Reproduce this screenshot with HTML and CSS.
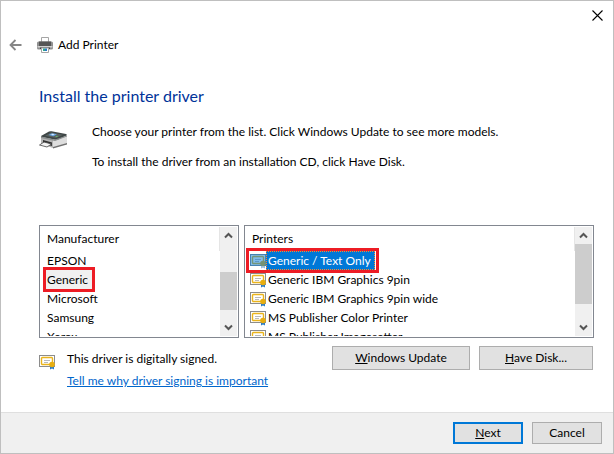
FILE: index.html
```html
<!DOCTYPE html>
<html lang="en">

    <head>
        <meta charset="UTF-8">
        <meta name="viewport" content="width=device-width, initial-scale=1.0">
        <title>Add Printer</title>
        <link rel="stylesheet" href="styles.css">
    </head>

    <body>
        <!-- shared icon shapes -->
        <svg class="icon-defs" width="0" height="0" aria-hidden="true">
            <symbol id="cert" viewBox="0 0 16 16">
                <rect x="0.5" y="1.5" width="15" height="11" fill="#fff" stroke="#8c8c8c" />
                <rect x="2.5" y="3.5" width="11" height="7" rx="1" fill="#fff" stroke="#eab41c" stroke-width="1.4" />
                <path d="M5 6.500h6M5 8.500h4" stroke="#b9b9b9" />
                <path d="M11 11v4.500l2-1 2 1V11z" fill="#2b7cc9" />
                <circle cx="13" cy="10.500" r="2.800" fill="#e8ae10" />
            </symbol>
            <symbol id="up" viewBox="0 0 17 17">
                <path d="M5 10.500l3.500-3.500 3.500 3.500" fill="none" stroke="#555" stroke-width="2" />
            </symbol>
            <symbol id="down" viewBox="0 0 17 17">
                <path d="M5 6.500l3.500 3.500 3.500-3.500" fill="none" stroke="#555" stroke-width="2" />
            </symbol>
        </svg>

        <div class="window">
            <div class="titlebar">
                <button type="button" class="btn-close" aria-label="Close">
                    <svg width="11" height="11" viewBox="0 0 11 11">
                        <path d="M0.500 0.500l10 10M10.500 0.500l-10 10" stroke="#000" stroke-width="1.100" />
                    </svg>
                </button>
            </div>

            <header class="wizard-header">
                <button type="button" class="btn-back" aria-label="Back">
                    <svg width="13" height="12" viewBox="0 0 13 12">
                        <path d="M6.500 1L1.500 6l5 5M1.500 6H12.500" fill="none" stroke="#868686" stroke-width="1.800" />
                    </svg>
                </button>
                <svg width="16" height="16" viewBox="0 0 16 16" aria-hidden="true">
                    <path d="M4.500 6V0.500h7V6" fill="#fff" stroke="#a5a5a5" />
                    <rect x="0" y="4.500" width="16" height="8" rx="1.500" fill="#8f8f8f" />
                    <rect x="2" y="4.500" width="12" height="4.500" fill="#555" />
                    <rect x="0.500" y="9" width="15" height="1.500" fill="#d0d0d0" />
                    <rect x="3" y="10.500" width="10" height="1.500" fill="#444" />
                    <path d="M4.500 11h7v4.500h-7z" fill="#fff" stroke="#a5a5a5" />
                    <rect x="6" y="11.500" width="2" height="2.500" fill="#2fa58c" />
                    <rect x="8" y="11.500" width="2" height="2.500" fill="#2878c8" />
                </svg>
                <span>Add Printer</span>
            </header>

            <main class="content">
                <h1>Install the printer driver</h1>

                <div class="intro">
                    <svg width="30" height="20" viewBox="0 0 30 20" aria-hidden="true">
                        <path d="M2 7L14 10V18L2 14z" fill="#b4b4b4" />
                        <path d="M14 10L28 6V13.500L14 17.500z" fill="#dedede" />
                        <path d="M14 17L28 13V14.500L14 18.500z" fill="#707070" />
                        <path d="M2 6L10 1.500Q11 1 12.500 1.200L27 4Q28.500 4.500 27.500 5.500L19 9.500Q17 10 15 9.500L2.500 7z" fill="#3e4646" />
                        <path d="M2 6.500L16 9.500L28 5.500V6.500L16 11L2 8z" fill="#8b8f8f" />
                        <path d="M6 5.800L12 2.500L24 4.800L17 8z" fill="#59615f" />
                        <path d="M9.500 5L13 3.200L18 4.300L14.500 6.300z" fill="#6ba8e5" />
                        <path d="M12 4.500l2-.7 1.500.6-2 .8z" fill="#d6ebff" />
                        <path d="M16 6.500l2-.8 1.500.5-2 .9z" fill="#65b870" />
                        <path d="M4 10L13 12.500V16L4 13z" fill="#303030" />
                        <path d="M5 12L12.500 14L8 17L0.500 15z" fill="#f3f3f3" stroke="#444" stroke-width=".8" />
                    </svg>
                    <div class="intro-text">
                        <p>Choose your printer from the list. Click Windows Update to see more models.</p>
                        <p>To install the driver from an installation CD, click Have Disk.</p>
                    </div>
                </div>

                <div class="lists">
                    <section class="listbox">
                        <div class="list-view">
                            <h2 id="manufacturer">Manufacturer</h2>
                            <ul role="listbox" aria-labelledby="manufacturer">
                                <li role="option"><span class="name">EPSON</span></li>
                                <li role="option" aria-selected="true" class="picked"><span class="name">Generic</span></li>
                                <li role="option"><span class="name">Microsoft</span></li>
                                <li role="option"><span class="name">Samsung</span></li>
                                <li role="option"><span class="name">Xerox</span></li>
                            </ul>
                        </div>
                        <div class="scrollbar">
                            <button type="button" aria-label="Scroll up"><svg><use href="#up" /></svg></button>
                            <div class="track track-low"><div class="thumb thumb-short"></div></div>
                            <button type="button" aria-label="Scroll down"><svg><use href="#down" /></svg></button>
                        </div>
                    </section>

                    <section class="listbox">
                        <div class="list-view">
                            <h2 id="printers">Printers</h2>
                            <ul role="listbox" aria-labelledby="printers" class="with-icons">
                                <li role="option" aria-selected="true" class="picked active"><svg class="cert"><use href="#cert" /></svg><span class="name">Generic / Text Only</span></li>
                                <li role="option"><svg class="cert"><use href="#cert" /></svg><span class="name">Generic IBM Graphics 9pin</span></li>
                                <li role="option"><svg class="cert"><use href="#cert" /></svg><span class="name">Generic IBM Graphics 9pin wide</span></li>
                                <li role="option"><svg class="cert"><use href="#cert" /></svg><span class="name">MS Publisher Color Printer</span></li>
                                <li role="option"><svg class="cert"><use href="#cert" /></svg><span class="name">MS Publisher Imagesetter</span></li>
                            </ul>
                        </div>
                        <div class="scrollbar">
                            <button type="button" aria-label="Scroll up"><svg><use href="#up" /></svg></button>
                            <div class="track"><div class="thumb"></div></div>
                            <button type="button" aria-label="Scroll down"><svg><use href="#down" /></svg></button>
                        </div>
                    </section>
                </div>

                <div class="signing">
                    <svg class="cert"><use href="#cert" /></svg>
                    <div class="signing-text">
                        <p>This driver is digitally signed.</p>
                        <a href="#">Tell me why driver signing is important</a>
                    </div>
                    <div class="signing-buttons">
                        <button type="button" class="btn btn-update"><u>W</u>indows Update</button>
                        <button type="button" class="btn btn-disk"><u>H</u>ave Disk...</button>
                    </div>
                </div>
            </main>

            <footer class="footer">
                <button type="button" class="btn btn-next"><u>N</u>ext</button>
                <button type="button" class="btn">Cancel</button>
            </footer>
        </div>
    </body>

</html>
```
FILE: styles.css
```css
* {
    box-sizing: border-box;
}

body {
    margin: 0;
    font-family: "Segoe UI", Lato, "Open Sans", sans-serif;
    font-size: 12px;
    line-height: 16px;
    color: #000;
    background: #fff;
}

h1,
h2,
p,
ul {
    margin: 0;
    padding: 0;
    font-weight: normal;
}

ul {
    list-style: none;
}

svg {
    display: block;
    flex: none;
}

button {
    padding: 0;
    border: none;
    background: none;
    font: inherit;
    color: inherit;
}

.icon-defs {
    position: absolute;
}

.window {
    display: flex;
    flex-direction: column;
    min-height: 100vh;
    border: 1px solid #bfbfbf;
}

.titlebar {
    display: flex;
    justify-content: flex-end;
    padding: 9px 10px 0 0;
}

.wizard-header {
    display: flex;
    align-items: center;
    padding: 16px 8px 0;
}

.btn-back {
    margin-right: 15px;
}

.wizard-header span {
    margin-left: 5px;
}

.content {
    flex: 1;
    padding: 32px 19px 0 38px;
}

h1 {
    font-size: 16px;
    line-height: 22px;
    color: #003399;
}

.intro {
    display: flex;
    gap: 23px;
    margin-top: 17px;
}

.intro > svg {
    margin-top: 6px;
}

.intro-text p {
    margin-bottom: 14px;
}

.lists {
    display: grid;
    grid-template-columns: 200px 1fr;
    gap: 5px;
    margin-top: 41px;
}

.listbox {
    display: flex;
    height: 113px;
    padding: 1px;
    border: 1px solid #828790;
}

.list-view {
    flex: 1;
    overflow: hidden;
}

h2 {
    height: 24px;
    padding-left: 6px;
    border-right: 1px solid #e5e5e5;
    font-size: 12px;
    line-height: 24px;
}

li {
    display: flex;
    align-items: center;
    height: 19px;
    padding-left: 4px;
}

.with-icons li {
    padding-left: 4px;
}

.name {
    padding: 0 2px;
    line-height: 19px;
}

.cert {
    width: 16px;
    height: 16px;
}

.picked {
    width: max-content;
    margin-left: 5px;
    padding: 0;
    background: #f0f0f0;
    outline: 3px solid #ed1c24;
}

.picked .name {
    padding: 0 4px 0 1px;
}

.with-icons .picked {
    margin-left: 3px;
    padding: 0 1px;
    background: #fff;
}

.active .name {
    padding: 0 4px 0 2px;
    background: #0078d7;
    color: #fff;
    outline: 1px dotted #ff8728;
    outline-offset: -1px;
}

.active .cert use {
    opacity: 0.5;
}

.active .cert {
    background: linear-gradient(#0078d7, #0078d7) 0 1px / 16px 12px no-repeat;
}

.scrollbar {
    display: flex;
    flex-direction: column;
    width: 17px;
    background: #f0f0f0;
}

.scrollbar svg {
    width: 17px;
    height: 17px;
}

.track {
    flex: 1;
}

.track-low {
    padding-top: 28px;
}

.thumb {
    height: 60px;
    background: #cdcdcd;
}

.thumb-short {
    height: 38px;
}

.signing {
    display: flex;
    align-items: flex-start;
    margin-top: 8px;
    padding-right: 1px;
}

.signing .cert {
    margin-top: 8px;
}

.signing-text {
    flex: 1;
    margin: 5px 0 0 12px;
}

.signing-text p {
    margin-bottom: 6px;
}

a {
    color: #0066cc;
}

.signing-buttons {
    display: flex;
    gap: 9px;
}

.btn {
    min-width: 70px;
    height: 22px;
    border: 1px solid #adadad;
    background: #e1e1e1;
}

.signing-buttons .btn {
    height: 24px;
}

.btn-update {
    width: 138px;
}

.btn-disk {
    width: 114px;
}

.btn-next {
    border: 2px solid #0078d7;
}

.footer {
    display: flex;
    justify-content: flex-end;
    gap: 9px;
    padding: 9px 11px;
    border-top: 1px solid #dfdfdf;
    background: #f0f0f0;
}
```
